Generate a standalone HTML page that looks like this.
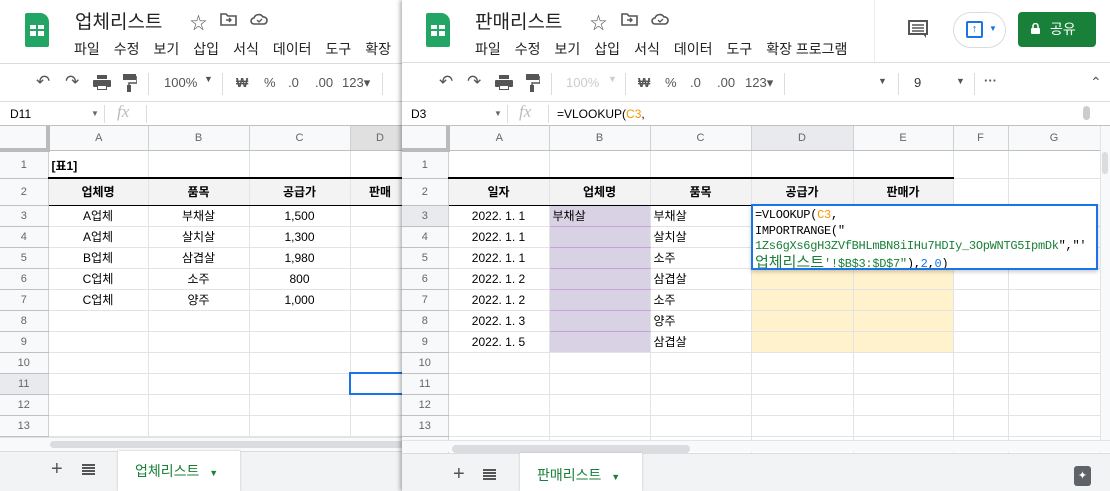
<!DOCTYPE html>
<html><head><meta charset="utf-8"><style>
*{box-sizing:border-box;margin:0;padding:0}
body{width:1110px;height:491px;overflow:hidden;background:#fff;font-family:"Liberation Sans","Noto Sans CJK KR",sans-serif;position:relative}
.win{position:absolute;top:0;height:491px;overflow:hidden;background:#fff}
.a{position:absolute;white-space:nowrap}
table{border-collapse:collapse;table-layout:fixed;position:absolute}
td{border-right:1px solid #e2e3e3;border-bottom:1px solid #e2e3e3;font-size:12px;color:#000;overflow:hidden;white-space:nowrap;padding:0 3px;height:21px}
td.h{background:#f8f9fa;color:#666;font-size:11px;text-align:center;border-color:#c0c0c0 #d0d0d0}
td.c{text-align:center}
tr.g td:not(.h){background:#f3f3f3;font-weight:bold;text-align:center;border-top:2px solid #000;border-bottom:1px solid #000}
.menu span{margin-right:14px}
.tb{color:#555;font-size:13px}
.logo{position:absolute;width:24px;height:34px;background:#23a566;border-radius:2px 9px 2px 2px}
.logo:after{content:"";position:absolute;left:5px;top:12px;width:14px;height:11px;background:linear-gradient(#23a566,#23a566) 6px 0/2px 11px no-repeat,linear-gradient(#23a566,#23a566) 0 4px/14px 2px no-repeat,#fff}
</style></head><body>

<!-- LEFT WINDOW -->
<div class="win" style="left:0;width:403px">
 <div class="logo" style="left:25px;top:13px"></div>
 <div class="a" style="left:75px;top:7px;font-size:19px;color:#222">업체리스트</div>
 <div class="a" style="left:190px;top:9px;font-size:17px;color:#555">☆</div>
 <svg class="a" style="left:220px;top:12px" width="17" height="14"><path d="M1 2h5l2 2h8v9H1z" fill="none" stroke="#555" stroke-width="1.6"/><path d="M6 8h5M9 6l2 2-2 2" stroke="#555" fill="none" stroke-width="1.4"/></svg>
 <svg class="a" style="left:250px;top:12px" width="18" height="14"><path d="M4 12a3 3 0 010-6 5 5 0 019-1 3.5 3.5 0 011 7z" fill="none" stroke="#555" stroke-width="1.6"/><path d="M7 8l2 2 3-3" stroke="#555" fill="none" stroke-width="1.3"/></svg>
 <div class="a menu" style="left:74px;top:39px;font-size:14px;color:#222"><span>파일</span><span>수정</span><span>보기</span><span>삽입</span><span>서식</span><span>데이터</span><span>도구</span><span>확장</span></div>
 <div class="a" style="left:0;top:63px;width:403px;border-top:1px solid #dadce0"></div>
 <div class="a tb" style="left:36px;top:72px;font-size:17px">↶</div>
 <div class="a tb" style="left:65px;top:72px;font-size:17px">↷</div>
 <svg class="a" style="left:93px;top:75px" width="18" height="16"><rect x="4" y="0" width="10" height="4" fill="#555"/><rect x="0" y="5" width="18" height="7" rx="1" fill="#555"/><rect x="4" y="10" width="10" height="5" fill="#555"/><rect x="5" y="11" width="8" height="3" fill="#fff"/></svg>
 <svg class="a" style="left:123px;top:74px" width="14" height="18"><rect x="0" y="0" width="13" height="6" fill="#555"/><path d="M13 3h1v6H6v3" stroke="#555" fill="none" stroke-width="1.5"/><rect x="4" y="11" width="4" height="7" fill="#555"/></svg>
 <div class="a" style="left:148px;top:73px;height:22px;border-left:1px solid #dadce0"></div>
 <div class="a tb" style="left:164px;top:75px">100%</div><div class="a tb" style="left:204px;top:74px;font-size:9px">▼</div>
 <div class="a" style="left:222px;top:73px;height:22px;border-left:1px solid #dadce0"></div>
 <div class="a tb" style="left:236px;top:75px;font-weight:bold">₩</div>
 <div class="a tb" style="left:264px;top:75px">%</div>
 <div class="a tb" style="left:288px;top:75px">.0</div>
 <div class="a tb" style="left:315px;top:75px">.00</div>
 <div class="a tb" style="left:342px;top:75px">123▾</div>
 <div class="a" style="left:382px;top:73px;height:22px;border-left:1px solid #dadce0"></div>
 <div class="a" style="left:0;top:101px;width:403px;border-top:1px solid #dadce0"></div>
 <div class="a" style="left:10px;top:107px;font-size:12px">D11</div>
 <div class="a" style="left:91px;top:109px;font-size:8px;color:#666">▼</div>
 <div class="a" style="left:104px;top:105px;height:18px;border-left:1px solid #dadce0"></div>
 <div class="a" style="left:117px;top:102px;font-size:17px;font-style:italic;color:#bbb;font-family:'Liberation Serif',serif">fx</div>
 <div class="a" style="left:146px;top:105px;height:18px;border-left:1px solid #dadce0"></div>
 <div class="a" style="left:0;top:125px;width:403px;border-top:1px solid #c0c0c0"></div>
 <table style="left:0;top:126px;width:410px">
  <colgroup><col style="width:48px"><col style="width:100px"><col style="width:101px"><col style="width:101px"><col style="width:60px"></colgroup>
  <tr style="height:24px"><td class="h" style="border-right:4px solid #bbb;border-bottom:4px solid #bbb"></td><td class="h">A</td><td class="h">B</td><td class="h">C</td><td class="h" style="background:#e0e0e0">D</td></tr>
  <tr style="height:28px"><td class="h">1</td><td style="font-weight:bold;vertical-align:bottom;padding-bottom:3px">[표1]</td><td></td><td></td><td></td></tr>
  <tr class="g" style="height:27px"><td class="h">2</td><td>업체명</td><td>품목</td><td>공급가</td><td>판매</td></tr>
  <tr><td class="h">3</td><td class="c">A업체</td><td class="c">부채살</td><td class="c">1,500</td><td></td></tr>
  <tr><td class="h">4</td><td class="c">A업체</td><td class="c">살치살</td><td class="c">1,300</td><td></td></tr>
  <tr><td class="h">5</td><td class="c">B업체</td><td class="c">삼겹살</td><td class="c">1,980</td><td></td></tr>
  <tr><td class="h">6</td><td class="c">C업체</td><td class="c">소주</td><td class="c">800</td><td></td></tr>
  <tr><td class="h">7</td><td class="c">C업체</td><td class="c">양주</td><td class="c">1,000</td><td></td></tr>
  <tr><td class="h">8</td><td></td><td></td><td></td><td></td></tr>
  <tr><td class="h">9</td><td></td><td></td><td></td><td></td></tr>
  <tr><td class="h">10</td><td></td><td></td><td></td><td></td></tr>
  <tr><td class="h" style="background:#e8eaed">11</td><td></td><td></td><td></td><td style="border:2px solid #1a73e8"></td></tr>
  <tr><td class="h">12</td><td></td><td></td><td></td><td></td></tr>
  <tr><td class="h">13</td><td></td><td></td><td></td><td></td></tr>
  <tr><td class="h"></td><td></td><td></td><td></td><td></td></tr>
 </table>
 <div class="a" style="left:0;top:437px;width:403px;height:14px;background:#f8f9fa;border-top:1px solid #e2e3e3"></div>
 <div class="a" style="left:50px;top:441px;width:360px;height:7px;background:#dadce0;border-radius:4px"></div>
 <div class="a" style="left:0;top:451px;width:403px;height:40px;background:#f1f3f4;border-top:1px solid #dadce0"></div>
 <div class="a" style="left:51px;top:458px;font-size:20px;color:#555">+</div>
 <div class="a" style="left:82px;top:464px;width:13px;height:11px;background:repeating-linear-gradient(#555 0 2px,transparent 2px 3px)"></div>
 <div class="a" style="left:118px;top:451px;width:122px;height:40px;background:#fff;box-shadow:0 0 2px #bbb"></div>
 <div class="a" style="left:135px;top:461px;font-size:14px;color:#188038">업체리스트 <span style="font-size:9px;margin-left:6px">▼</span></div>
</div>

<!-- RIGHT WINDOW -->
<div class="win" style="left:402px;width:708px;box-shadow:-2px 0 4px rgba(0,0,0,.3)">
 <div class="logo" style="left:24px;top:13px"></div>
 <div class="a" style="left:73px;top:7px;font-size:19px;color:#222">판매리스트</div>
 <div class="a" style="left:188px;top:9px;font-size:17px;color:#555">☆</div>
 <svg class="a" style="left:219px;top:12px" width="17" height="14"><path d="M1 2h5l2 2h8v9H1z" fill="none" stroke="#555" stroke-width="1.6"/><path d="M6 8h5M9 6l2 2-2 2" stroke="#555" fill="none" stroke-width="1.4"/></svg>
 <svg class="a" style="left:249px;top:12px" width="18" height="14"><path d="M4 12a3 3 0 010-6 5 5 0 019-1 3.5 3.5 0 011 7z" fill="none" stroke="#555" stroke-width="1.6"/><path d="M7 8l2 2 3-3" stroke="#555" fill="none" stroke-width="1.3"/></svg>
 <div class="a menu" style="left:73px;top:39px;font-size:14px;color:#222"><span>파일</span><span>수정</span><span>보기</span><span>삽입</span><span>서식</span><span>데이터</span><span>도구</span><span style="margin:0">확장 프로그램</span></div>
 <div class="a" style="left:472px;top:0;height:62px;border-left:1px solid #eee"></div>
 <svg class="a" style="left:506px;top:20px" width="20" height="19"><path d="M1 1h18v13H1z" fill="none" stroke="#555" stroke-width="2"/><path d="M4 5h12M4 8h12M4 11h12" stroke="#555" stroke-width="1.5"/><path d="M15 14l3 4v-4" fill="#555"/></svg>
 <div class="a" style="left:551px;top:12px;width:53px;height:36px;border:1px solid #dadce0;border-radius:18px"></div>
 <div class="a" style="left:564px;top:21px;width:17px;height:17px;border:2px solid #1a73e8;border-radius:2px;color:#1a73e8;font-size:11px;text-align:center;line-height:13px;font-weight:bold">↑</div>
 <div class="a" style="left:587px;top:24px;font-size:8px;color:#1a73e8">▼</div>
 <div class="a" style="left:616px;top:12px;width:78px;height:35px;background:#188038;border-radius:4px;color:#fff;font-size:14px;line-height:35px;padding-left:32px">공유</div>
 <svg class="a" style="left:629px;top:23px" width="9" height="11"><path d="M2 5V3a2.5 2.5 0 015 0v2" stroke="#fff" fill="none" stroke-width="1.5"/><rect x="0" y="5" width="9" height="6" rx="1" fill="#fff"/></svg>
 <div class="a" style="left:0;top:62px;width:708px;border-top:1px solid #dadce0"></div>
 <div class="a tb" style="left:37px;top:72px;font-size:17px">↶</div>
 <div class="a tb" style="left:65px;top:72px;font-size:17px">↷</div>
 <svg class="a" style="left:93px;top:75px" width="18" height="16"><rect x="4" y="0" width="10" height="4" fill="#555"/><rect x="0" y="5" width="18" height="7" rx="1" fill="#555"/><rect x="4" y="10" width="10" height="5" fill="#555"/><rect x="5" y="11" width="8" height="3" fill="#fff"/></svg>
 <svg class="a" style="left:124px;top:74px" width="14" height="18"><rect x="0" y="0" width="13" height="6" fill="#555"/><path d="M13 3h1v6H6v3" stroke="#555" fill="none" stroke-width="1.5"/><rect x="4" y="11" width="4" height="7" fill="#555"/></svg>
 <div class="a" style="left:149px;top:73px;height:22px;border-left:1px solid #dadce0"></div>
 <div class="a tb" style="left:164px;top:75px;color:#ccc">100%</div><div class="a tb" style="left:206px;top:74px;font-size:9px;color:#ccc">▼</div>
 <div class="a" style="left:223px;top:73px;height:22px;border-left:1px solid #dadce0"></div>
 <div class="a tb" style="left:236px;top:75px;font-weight:bold">₩</div>
 <div class="a tb" style="left:263px;top:75px">%</div>
 <div class="a tb" style="left:288px;top:75px">.0</div>
 <div class="a tb" style="left:315px;top:75px">.00</div>
 <div class="a tb" style="left:343px;top:75px">123▾</div>
 <div class="a" style="left:382px;top:73px;height:22px;border-left:1px solid #dadce0"></div>
 <div class="a" style="left:476px;top:76px;font-size:9px;color:#555">▼</div>
 <div class="a" style="left:496px;top:73px;height:22px;border-left:1px solid #dadce0"></div>
 <div class="a tb" style="left:512px;top:75px;color:#333">9</div>
 <div class="a" style="left:554px;top:76px;font-size:9px;color:#555">▼</div>
 <div class="a" style="left:572px;top:73px;height:22px;border-left:1px solid #dadce0"></div>
 <div class="a tb" style="left:582px;top:73px;font-weight:bold">···</div>
 <div class="a tb" style="left:688px;top:74px;font-size:14px">⌃</div>
 <div class="a" style="left:0;top:101px;width:708px;border-top:1px solid #dadce0"></div>
 <div class="a" style="left:9px;top:107px;font-size:12px">D3</div>
 <div class="a" style="left:92px;top:109px;font-size:8px;color:#666">▼</div>
 <div class="a" style="left:105px;top:105px;height:18px;border-left:1px solid #dadce0"></div>
 <div class="a" style="left:117px;top:102px;font-size:17px;font-style:italic;color:#bbb;font-family:'Liberation Serif',serif">fx</div>
 <div class="a" style="left:146px;top:105px;height:18px;border-left:1px solid #dadce0"></div>
 <div class="a" style="left:155px;top:107px;font-size:12px">=VLOOKUP(<span style="color:#f29900">C3</span>,</div>
 <div class="a" style="left:681px;top:106px;width:7px;height:14px;background:#ccc;border-radius:4px"></div>
 <div class="a" style="left:0;top:125px;width:708px;border-top:1px solid #c0c0c0"></div>
 <table style="left:0;top:126px;width:698px">
  <colgroup><col style="width:46px"><col style="width:101px"><col style="width:101px"><col style="width:101px"><col style="width:102px"><col style="width:100px"><col style="width:55px"><col style="width:92px"></colgroup>
  <tr style="height:24px"><td class="h" style="border-right:4px solid #bbb;border-bottom:4px solid #bbb"></td><td class="h">A</td><td class="h">B</td><td class="h">C</td><td class="h" style="background:#e8eaed">D</td><td class="h">E</td><td class="h">F</td><td class="h">G</td></tr>
  <tr style="height:28px"><td class="h">1</td><td></td><td></td><td></td><td></td><td></td><td></td><td></td></tr>
  <tr class="g" style="height:27px"><td class="h">2</td><td>일자</td><td>업체명</td><td>품목</td><td>공급가</td><td>판매가</td><td style="background:#fff;border:none;border-right:1px solid #e2e3e3;border-bottom:1px solid #e2e3e3"></td><td style="background:#fff;border:none;border-bottom:1px solid #e2e3e3"></td></tr>
  <tr><td class="h" style="background:#e8eaed">3</td><td class="c">2022. 1. 1</td><td style="background:#d9d2e4;border-bottom-color:#c9a0dc">부채살</td><td>부채살</td><td></td><td></td><td></td><td></td></tr>
  <tr><td class="h">4</td><td class="c">2022. 1. 1</td><td style="background:#d9d2e4;border-bottom-color:#c9a0dc"></td><td>살치살</td><td></td><td></td><td></td><td></td></tr>
  <tr><td class="h">5</td><td class="c">2022. 1. 1</td><td style="background:#d9d2e4;border-bottom-color:#c9a0dc"></td><td>소주</td><td></td><td></td><td></td><td></td></tr>
  <tr><td class="h">6</td><td class="c">2022. 1. 2</td><td style="background:#d9d2e4;border-bottom-color:#c9a0dc"></td><td>삼겹살</td><td style="background:#fff2cc"></td><td style="background:#fff2cc"></td><td></td><td></td></tr>
  <tr><td class="h">7</td><td class="c">2022. 1. 2</td><td style="background:#d9d2e4;border-bottom-color:#c9a0dc"></td><td>소주</td><td style="background:#fff2cc"></td><td style="background:#fff2cc"></td><td></td><td></td></tr>
  <tr><td class="h">8</td><td class="c">2022. 1. 3</td><td style="background:#d9d2e4;border-bottom-color:#c9a0dc"></td><td>양주</td><td style="background:#fff2cc"></td><td style="background:#fff2cc"></td><td></td><td></td></tr>
  <tr><td class="h">9</td><td class="c">2022. 1. 5</td><td style="background:#d9d2e4"></td><td>삼겹살</td><td style="background:#fff2cc"></td><td style="background:#fff2cc"></td><td></td><td></td></tr>
  <tr><td class="h">10</td><td></td><td></td><td></td><td></td><td></td><td></td><td></td></tr>
  <tr><td class="h">11</td><td></td><td></td><td></td><td></td><td></td><td></td><td></td></tr>
  <tr><td class="h">12</td><td></td><td></td><td></td><td></td><td></td><td></td><td></td></tr>
  <tr><td class="h">13</td><td></td><td></td><td></td><td></td><td></td><td></td><td></td></tr>
  <tr><td class="h"></td><td></td><td></td><td></td><td></td><td></td><td></td><td></td></tr>
 </table>
 <div class="a" style="left:349px;top:204px;width:347px;height:66px;background:#fff;border:2px solid #1a73e8;box-shadow:0 2px 4px rgba(0,0,0,.2);font-family:'Liberation Mono','Noto Sans CJK KR',monospace;font-size:12px;line-height:15.5px;padding:2px 2px;letter-spacing:-0.3px;overflow:hidden">
  =VLOOKUP(<span style="color:#f29900">C3</span>,<br>IMPORTRANGE("<br><span style="color:#188038">1Zs6gXs6gH3ZVfBHLmBN8iIHu7HDIy_3OpWNTG5IpmDk</span>","'<br><span style="color:#188038;font-family:'Liberation Sans','Noto Sans CJK KR',sans-serif;font-size:15px;letter-spacing:0">업체리스트</span><span style="color:#188038">'!$B$3:$D$7"</span>),<span style="color:#1a73e8">2</span>,<span style="color:#1a73e8">0</span>)
 </div>
 <div class="a" style="left:698px;top:126px;width:10px;height:320px;background:#f8f9fa;border-left:1px solid #e2e3e3"></div>
 <div class="a" style="left:700px;top:152px;width:6px;height:22px;background:#dadce0;border-radius:3px"></div>
 <div class="a" style="left:0;top:440px;width:708px;height:12px;background:#f8f9fa;border-top:1px solid #e2e3e3"></div>
 <div class="a" style="left:50px;top:445px;width:238px;height:8px;background:#dadce0;border-radius:4px"></div>
 <div class="a" style="left:0;top:453px;width:708px;height:38px;background:#f1f3f4;border-top:1px solid #dadce0"></div>
 <div class="a" style="left:51px;top:463px;font-size:20px;color:#555">+</div>
 <div class="a" style="left:81px;top:469px;width:13px;height:11px;background:repeating-linear-gradient(#555 0 2px,transparent 2px 3px)"></div>
 <div class="a" style="left:118px;top:453px;width:122px;height:38px;background:#fff;box-shadow:0 0 2px #bbb"></div>
 <div class="a" style="left:135px;top:465px;font-size:14px;color:#188038">판매리스트 <span style="font-size:9px;margin-left:6px">▼</span></div>
 <div class="a" style="left:672px;top:466px;width:17px;height:20px;background:#5f6368;border-radius:3px;color:#fff;font-size:11px;text-align:center;line-height:20px">✦</div>
</div>
</body></html>
